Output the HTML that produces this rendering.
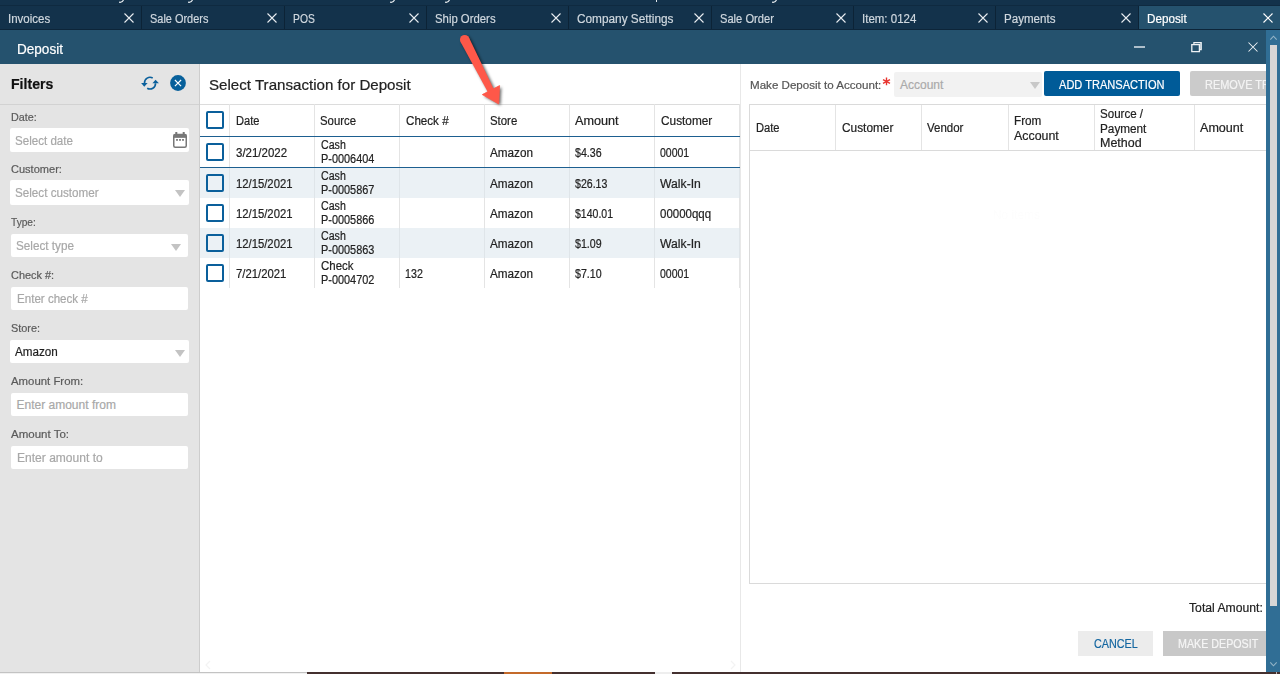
<!DOCTYPE html>
<html><head><meta charset="utf-8">
<style>
*{margin:0;padding:0;box-sizing:border-box}
html,body{width:1280px;height:674px;overflow:hidden;background:#fff;font-family:"Liberation Sans",sans-serif;position:relative}
.a{position:absolute}
.t{position:absolute;white-space:nowrap;line-height:1;-webkit-text-stroke:0.2px currentColor}
</style></head><body>
<div class="a" style="left:0px;top:0px;width:1280px;height:30px;background:#13324b;"></div>
<div class="a" style="left:0px;top:5px;width:1280px;height:1px;background:#0f2a40;"></div>
<svg class="a" style="left:119px;top:0px" width="6" height="3"><path d="M0 2.2Q3 3 4.5 0" stroke="#e6ebef" stroke-width="1.2" fill="none"/></svg>
<svg class="a" style="left:188px;top:0px" width="6" height="3"><path d="M0 2.2Q3 3 4.5 0" stroke="#e6ebef" stroke-width="1.2" fill="none"/></svg>
<svg class="a" style="left:390px;top:0px" width="6" height="3"><path d="M0 2.2Q3 3 4.5 0" stroke="#e6ebef" stroke-width="1.2" fill="none"/></svg>
<svg class="a" style="left:445px;top:0px" width="6" height="3"><path d="M0 2.2Q3 3 4.5 0" stroke="#e6ebef" stroke-width="1.2" fill="none"/></svg>
<svg class="a" style="left:772px;top:0px" width="6" height="3"><path d="M0 2.2Q3 3 4.5 0" stroke="#e6ebef" stroke-width="1.2" fill="none"/></svg>
<div class="a" style="left:656px;top:0px;width:1.3px;height:2px;background:#e6ebef;"></div>
<div class="a" style="left:141px;top:6px;width:1px;height:23px;background:#0c2336;"></div>
<div class="t" style="left:8.40px;top:13.42px;font-size:12.5px;color:#d0d8df;font-weight:normal;transform:scaleX(0.9199);transform-origin:0 0;">Invoices</div>
<svg class="a" style="left:124px;top:13px" width="10" height="10" viewBox="0 0 10 10"><path d="M0.5 0.5L9.5 9.5M9.5 0.5L0.5 9.5" stroke="#e8edf1" stroke-width="1.1" fill="none"/></svg>
<div class="a" style="left:284px;top:6px;width:1px;height:23px;background:#0c2336;"></div>
<div class="t" style="left:150.20px;top:13.42px;font-size:12.5px;color:#d0d8df;font-weight:normal;transform:scaleX(0.8749);transform-origin:0 0;">Sale Orders</div>
<svg class="a" style="left:267px;top:13px" width="10" height="10" viewBox="0 0 10 10"><path d="M0.5 0.5L9.5 9.5M9.5 0.5L0.5 9.5" stroke="#e8edf1" stroke-width="1.1" fill="none"/></svg>
<div class="a" style="left:426px;top:6px;width:1px;height:23px;background:#0c2336;"></div>
<div class="t" style="left:293.30px;top:13.42px;font-size:12.5px;color:#d0d8df;font-weight:normal;transform:scaleX(0.8265);transform-origin:0 0;">POS</div>
<svg class="a" style="left:409px;top:13px" width="10" height="10" viewBox="0 0 10 10"><path d="M0.5 0.5L9.5 9.5M9.5 0.5L0.5 9.5" stroke="#e8edf1" stroke-width="1.1" fill="none"/></svg>
<div class="a" style="left:568px;top:6px;width:1px;height:23px;background:#0c2336;"></div>
<div class="t" style="left:435.30px;top:13.42px;font-size:12.5px;color:#d0d8df;font-weight:normal;transform:scaleX(0.9079);transform-origin:0 0;">Ship Orders</div>
<svg class="a" style="left:551px;top:13px" width="10" height="10" viewBox="0 0 10 10"><path d="M0.5 0.5L9.5 9.5M9.5 0.5L0.5 9.5" stroke="#e8edf1" stroke-width="1.1" fill="none"/></svg>
<div class="a" style="left:711px;top:6px;width:1px;height:23px;background:#0c2336;"></div>
<div class="t" style="left:577.30px;top:13.42px;font-size:12.5px;color:#d0d8df;font-weight:normal;transform:scaleX(0.9449);transform-origin:0 0;">Company Settings</div>
<svg class="a" style="left:694px;top:13px" width="10" height="10" viewBox="0 0 10 10"><path d="M0.5 0.5L9.5 9.5M9.5 0.5L0.5 9.5" stroke="#e8edf1" stroke-width="1.1" fill="none"/></svg>
<div class="a" style="left:853px;top:6px;width:1px;height:23px;background:#0c2336;"></div>
<div class="t" style="left:720.00px;top:13.42px;font-size:12.5px;color:#d0d8df;font-weight:normal;transform:scaleX(0.8909);transform-origin:0 0;">Sale Order</div>
<svg class="a" style="left:836px;top:13px" width="10" height="10" viewBox="0 0 10 10"><path d="M0.5 0.5L9.5 9.5M9.5 0.5L0.5 9.5" stroke="#e8edf1" stroke-width="1.1" fill="none"/></svg>
<div class="a" style="left:995px;top:6px;width:1px;height:23px;background:#0c2336;"></div>
<div class="t" style="left:862.00px;top:13.42px;font-size:12.5px;color:#d0d8df;font-weight:normal;transform:scaleX(0.9203);transform-origin:0 0;">Item: 0124</div>
<svg class="a" style="left:978px;top:13px" width="10" height="10" viewBox="0 0 10 10"><path d="M0.5 0.5L9.5 9.5M9.5 0.5L0.5 9.5" stroke="#e8edf1" stroke-width="1.1" fill="none"/></svg>
<div class="a" style="left:1138px;top:6px;width:1px;height:23px;background:#0c2336;"></div>
<div class="t" style="left:1004.20px;top:13.42px;font-size:12.5px;color:#d0d8df;font-weight:normal;transform:scaleX(0.9258);transform-origin:0 0;">Payments</div>
<svg class="a" style="left:1121px;top:13px" width="10" height="10" viewBox="0 0 10 10"><path d="M0.5 0.5L9.5 9.5M9.5 0.5L0.5 9.5" stroke="#e8edf1" stroke-width="1.1" fill="none"/></svg>
<div class="a" style="left:1139px;top:6px;width:141px;height:23px;background:#25526e;"></div>
<div class="t" style="left:1147.25px;top:13.42px;font-size:12.5px;color:#ffffff;font-weight:normal;transform:scaleX(0.9357);transform-origin:0 0;">Deposit</div>
<svg class="a" style="left:1263px;top:13px" width="10" height="10" viewBox="0 0 10 10"><path d="M0.5 0.5L9.5 9.5M9.5 0.5L0.5 9.5" stroke="#ffffff" stroke-width="1.1" fill="none"/></svg>
<div class="a" style="left:0px;top:29px;width:1280px;height:1px;background:#0d2539;"></div>
<div class="a" style="left:0px;top:30px;width:1280px;height:34px;background:#25526e;"></div>
<div class="t" style="left:16.75px;top:42.15px;font-size:14px;color:#ffffff;font-weight:normal;transform:scaleX(0.9684);transform-origin:0 0;">Deposit</div>
<div class="a" style="left:1134px;top:46px;width:11px;height:2px;background:#aebfcb;"></div>
<svg class="a" style="left:1190px;top:41px" width="13" height="13" viewBox="1190 41 13 13"><rect x="1200" y="43.2" width="1.4" height="6" fill="#a3b6c3"/><path d="M1191.8 44.7h7.6v7h-7.6z" stroke="#eef2f5" stroke-width="1.3" fill="none"/><path d="M1193.9 44.4V42.6H1201.2V49.6H1199.8" stroke="#eef2f5" stroke-width="1.2" fill="none"/></svg>
<svg class="a" style="left:1248.3px;top:42px" width="10" height="10" viewBox="0 0 10 10"><path d="M0.5 0.5L9.5 9.5M9.5 0.5L0.5 9.5" stroke="#eef2f5" stroke-width="1.05" fill="none"/></svg>
<div class="a" style="left:0px;top:64px;width:200px;height:608px;background:#e4e4e4;"></div>
<div class="a" style="left:199px;top:64px;width:1px;height:608px;background:#cdcdcd;"></div>
<div class="t" style="left:10.50px;top:75.88px;font-size:15.5px;color:#111;font-weight:bold;transform:scaleX(0.9097);transform-origin:0 0;">Filters</div>
<svg class="a" style="left:136px;top:70px" width="30" height="26" viewBox="136 69.6 30 26">
<path d="M152.7 77.6A5.5 5.5 0 0 0 144.5 82.6" stroke="#0a609c" stroke-width="1.65" fill="none"/>
<path d="M141.1 82.5L147.6 82.5L144.3 86.3z" fill="#0a609c"/>
<path d="M147.2 87.8A5.5 5.5 0 0 0 155.5 82.8" stroke="#0a609c" stroke-width="1.65" fill="none"/>
<path d="M152.4 82.9L158.9 82.9L155.6 79.3z" fill="#0a609c"/>
</svg>
<svg class="a" style="left:170px;top:75px" width="16" height="16" viewBox="0 0 16 16">
<circle cx="8" cy="8" r="7.9" fill="#07609b"/>
<path d="M4.9 5L11.1 11.2M11.1 5L4.9 11.2" stroke="#fff" stroke-width="1.15"/>
</svg>
<div class="a" style="left:0px;top:104px;width:199px;height:1px;background:#d2d2d2;"></div>
<div class="t" style="left:10.60px;top:112.43px;font-size:11.3px;color:#5a5a5a;font-weight:normal;transform:scaleX(0.9544);transform-origin:0 0;">Date:</div>
<div class="a" style="left:10px;top:128px;width:179px;height:24px;background:#ffffff;border-radius:2px"></div>
<div class="t" style="left:15.20px;top:134.84px;font-size:12px;color:#a8a8a8;font-weight:normal;transform:scaleX(0.9650);transform-origin:0 0;">Select date</div>
<svg class="a" style="left:173px;top:132px" width="14" height="16" viewBox="0 0 14 16">
<rect x="0.75" y="2.45" width="12.5" height="12.8" rx="1.5" stroke="#777" stroke-width="1.5" fill="none"/>
<rect x="0.75" y="2.45" width="12.5" height="3.4" fill="#777"/>
<rect x="2.3" y="0" width="2" height="3" fill="#777"/><rect x="9.7" y="0" width="2" height="3" fill="#777"/>
<rect x="3.1" y="7" width="1.8" height="1.8" fill="#777"/><rect x="6.1" y="7" width="1.8" height="1.8" fill="#777"/><rect x="9.1" y="7" width="1.8" height="1.8" fill="#777"/>
</svg>
<div class="t" style="left:10.60px;top:164.43px;font-size:11.3px;color:#5a5a5a;font-weight:normal;transform:scaleX(0.9764);transform-origin:0 0;">Customer:</div>
<div class="a" style="left:10px;top:180px;width:179px;height:24.6px;background:#ffffff;border-radius:2px"></div>
<div class="t" style="left:15.20px;top:186.84px;font-size:12px;color:#a8a8a8;font-weight:normal;transform:scaleX(0.9715);transform-origin:0 0;">Select customer</div>
<svg class="a" style="left:175.0px;top:190px" width="10" height="7"><path d="M0 0h10L5 7z" fill="#c3c3c3"/></svg>
<div class="t" style="left:10.60px;top:217.43px;font-size:11.3px;color:#5a5a5a;font-weight:normal;transform:scaleX(0.8982);transform-origin:0 0;">Type:</div>
<div class="a" style="left:11px;top:233.7px;width:177px;height:23px;background:#ffffff;border-radius:2px"></div>
<div class="t" style="left:16.00px;top:239.84px;font-size:12px;color:#a8a8a8;font-weight:normal;transform:scaleX(0.9768);transform-origin:0 0;">Select type</div>
<svg class="a" style="left:170.5px;top:243.7px" width="10" height="7"><path d="M0 0h10L5 7z" fill="#c3c3c3"/></svg>
<div class="t" style="left:10.60px;top:270.43px;font-size:11.3px;color:#5a5a5a;font-weight:normal;transform:scaleX(0.9668);transform-origin:0 0;">Check #:</div>
<div class="a" style="left:11px;top:287px;width:177px;height:23px;background:#ffffff;border-radius:2px"></div>
<div class="t" style="left:16.50px;top:292.84px;font-size:12px;color:#a8a8a8;font-weight:normal;transform:scaleX(0.9649);transform-origin:0 0;">Enter check #</div>
<div class="t" style="left:10.60px;top:323.43px;font-size:11.3px;color:#5a5a5a;font-weight:normal;transform:scaleX(0.9633);transform-origin:0 0;">Store:</div>
<div class="a" style="left:10px;top:339.7px;width:179px;height:23.6px;background:#ffffff;border-radius:2px"></div>
<div class="t" style="left:15.20px;top:345.84px;font-size:12px;color:#1e1e1e;font-weight:normal;transform:scaleX(0.9727);transform-origin:0 0;">Amazon</div>
<svg class="a" style="left:175.0px;top:349.7px" width="10" height="7"><path d="M0 0h10L5 7z" fill="#c3c3c3"/></svg>
<div class="t" style="left:10.60px;top:376.43px;font-size:11.3px;color:#5a5a5a;font-weight:normal;transform:scaleX(1.0077);transform-origin:0 0;">Amount From:</div>
<div class="a" style="left:11px;top:393px;width:177px;height:23px;background:#ffffff;border-radius:2px"></div>
<div class="t" style="left:16.50px;top:398.84px;font-size:12px;color:#a8a8a8;font-weight:normal;">Enter amount from</div>
<div class="t" style="left:10.60px;top:429.43px;font-size:11.3px;color:#5a5a5a;font-weight:normal;transform:scaleX(1.0185);transform-origin:0 0;">Amount To:</div>
<div class="a" style="left:11px;top:446px;width:177px;height:23px;background:#ffffff;border-radius:2px"></div>
<div class="t" style="left:16.50px;top:451.84px;font-size:12px;color:#a8a8a8;font-weight:normal;transform:scaleX(1.0038);transform-origin:0 0;">Enter amount to</div>
<div class="t" style="left:208.60px;top:77.61px;font-size:14.4px;color:#222;font-weight:normal;transform:scaleX(1.0503);transform-origin:0 0;">Select Transaction for Deposit</div>
<div class="a" style="left:200px;top:104px;width:540px;height:1px;background:#dcdcdc;"></div>
<div class="a" style="left:229px;top:104px;width:1px;height:184px;background:#e4e4e4;"></div>
<div class="a" style="left:314px;top:104px;width:1px;height:184px;background:#e4e4e4;"></div>
<div class="a" style="left:399px;top:104px;width:1px;height:184px;background:#e4e4e4;"></div>
<div class="a" style="left:484px;top:104px;width:1px;height:184px;background:#e4e4e4;"></div>
<div class="a" style="left:569px;top:104px;width:1px;height:184px;background:#e4e4e4;"></div>
<div class="a" style="left:654px;top:104px;width:1px;height:184px;background:#e4e4e4;"></div>
<div class="a" style="left:739px;top:104px;width:1px;height:184px;background:#e4e4e4;"></div>
<div class="a" style="left:206px;top:111px;width:18px;height:18px;border:2px solid #0a5f9b;border-radius:2px"></div>
<div class="t" style="left:235.65px;top:114.84px;font-size:12px;color:#222;font-weight:normal;transform:scaleX(0.9241);transform-origin:0 0;">Date</div>
<div class="t" style="left:320.00px;top:114.84px;font-size:12px;color:#222;font-weight:normal;transform:scaleX(0.9474);transform-origin:0 0;">Source</div>
<div class="t" style="left:405.50px;top:114.84px;font-size:12px;color:#222;font-weight:normal;transform:scaleX(0.9682);transform-origin:0 0;">Check #</div>
<div class="t" style="left:490.00px;top:114.84px;font-size:12px;color:#222;font-weight:normal;transform:scaleX(0.9502);transform-origin:0 0;">Store</div>
<div class="t" style="left:575.20px;top:114.84px;font-size:12px;color:#222;font-weight:normal;transform:scaleX(1.0538);transform-origin:0 0;">Amount</div>
<div class="t" style="left:660.60px;top:114.84px;font-size:12px;color:#222;font-weight:normal;transform:scaleX(0.9865);transform-origin:0 0;">Customer</div>
<div class="a" style="left:206px;top:143px;width:18px;height:18px;border:2px solid #0a5f9b;border-radius:2px"></div>
<div class="t" style="left:235.50px;top:146.84px;font-size:12px;color:#222;font-weight:normal;transform:scaleX(0.9555);transform-origin:0 0;">3/21/2022</div>
<div class="t" style="left:320.50px;top:138.64px;font-size:12px;color:#222;font-weight:normal;transform:scaleX(0.8857);transform-origin:0 0;">Cash</div>
<div class="t" style="left:320.50px;top:153.34px;font-size:12px;color:#222;font-weight:normal;transform:scaleX(0.9089);transform-origin:0 0;">P-0006404</div>
<div class="t" style="left:490.30px;top:146.84px;font-size:12px;color:#222;font-weight:normal;transform:scaleX(0.9773);transform-origin:0 0;">Amazon</div>
<div class="t" style="left:575.30px;top:146.84px;font-size:12px;color:#222;font-weight:normal;transform:scaleX(0.8867);transform-origin:0 0;">$4.36</div>
<div class="t" style="left:659.80px;top:146.84px;font-size:12px;color:#222;font-weight:normal;transform:scaleX(0.8749);transform-origin:0 0;">00001</div>
<div class="a" style="left:200px;top:168px;width:540px;height:30px;background:#ebf1f5;"></div>
<div class="a" style="left:229px;top:168px;width:1px;height:30px;background:#dfe5e9;"></div>
<div class="a" style="left:314px;top:168px;width:1px;height:30px;background:#dfe5e9;"></div>
<div class="a" style="left:399px;top:168px;width:1px;height:30px;background:#dfe5e9;"></div>
<div class="a" style="left:484px;top:168px;width:1px;height:30px;background:#dfe5e9;"></div>
<div class="a" style="left:569px;top:168px;width:1px;height:30px;background:#dfe5e9;"></div>
<div class="a" style="left:654px;top:168px;width:1px;height:30px;background:#dfe5e9;"></div>
<div class="a" style="left:739px;top:168px;width:1px;height:30px;background:#dfe5e9;"></div>
<div class="a" style="left:206px;top:174px;width:18px;height:18px;border:2px solid #0a5f9b;border-radius:2px"></div>
<div class="t" style="left:235.50px;top:177.84px;font-size:12px;color:#222;font-weight:normal;transform:scaleX(0.9400);transform-origin:0 0;">12/15/2021</div>
<div class="t" style="left:320.50px;top:169.64px;font-size:12px;color:#222;font-weight:normal;transform:scaleX(0.8857);transform-origin:0 0;">Cash</div>
<div class="t" style="left:320.50px;top:184.34px;font-size:12px;color:#222;font-weight:normal;transform:scaleX(0.9089);transform-origin:0 0;">P-0005867</div>
<div class="t" style="left:490.30px;top:177.84px;font-size:12px;color:#222;font-weight:normal;transform:scaleX(0.9773);transform-origin:0 0;">Amazon</div>
<div class="t" style="left:575.30px;top:177.84px;font-size:12px;color:#222;font-weight:normal;transform:scaleX(0.8816);transform-origin:0 0;">$26.13</div>
<div class="t" style="left:659.80px;top:177.84px;font-size:12px;color:#222;font-weight:normal;transform:scaleX(1.0161);transform-origin:0 0;">Walk-In</div>
<div class="a" style="left:206px;top:204px;width:18px;height:18px;border:2px solid #0a5f9b;border-radius:2px"></div>
<div class="t" style="left:235.50px;top:207.84px;font-size:12px;color:#222;font-weight:normal;transform:scaleX(0.9400);transform-origin:0 0;">12/15/2021</div>
<div class="t" style="left:320.50px;top:199.64px;font-size:12px;color:#222;font-weight:normal;transform:scaleX(0.8857);transform-origin:0 0;">Cash</div>
<div class="t" style="left:320.50px;top:214.34px;font-size:12px;color:#222;font-weight:normal;transform:scaleX(0.9089);transform-origin:0 0;">P-0005866</div>
<div class="t" style="left:490.30px;top:207.84px;font-size:12px;color:#222;font-weight:normal;transform:scaleX(0.9773);transform-origin:0 0;">Amazon</div>
<div class="t" style="left:575.30px;top:207.84px;font-size:12px;color:#222;font-weight:normal;transform:scaleX(0.8761);transform-origin:0 0;">$140.01</div>
<div class="t" style="left:659.80px;top:207.84px;font-size:12px;color:#222;font-weight:normal;transform:scaleX(0.9555);transform-origin:0 0;">00000qqq</div>
<div class="a" style="left:200px;top:228px;width:540px;height:30px;background:#ebf1f5;"></div>
<div class="a" style="left:229px;top:228px;width:1px;height:30px;background:#dfe5e9;"></div>
<div class="a" style="left:314px;top:228px;width:1px;height:30px;background:#dfe5e9;"></div>
<div class="a" style="left:399px;top:228px;width:1px;height:30px;background:#dfe5e9;"></div>
<div class="a" style="left:484px;top:228px;width:1px;height:30px;background:#dfe5e9;"></div>
<div class="a" style="left:569px;top:228px;width:1px;height:30px;background:#dfe5e9;"></div>
<div class="a" style="left:654px;top:228px;width:1px;height:30px;background:#dfe5e9;"></div>
<div class="a" style="left:739px;top:228px;width:1px;height:30px;background:#dfe5e9;"></div>
<div class="a" style="left:206px;top:234px;width:18px;height:18px;border:2px solid #0a5f9b;border-radius:2px"></div>
<div class="t" style="left:235.50px;top:237.84px;font-size:12px;color:#222;font-weight:normal;transform:scaleX(0.9400);transform-origin:0 0;">12/15/2021</div>
<div class="t" style="left:320.50px;top:229.64px;font-size:12px;color:#222;font-weight:normal;transform:scaleX(0.8857);transform-origin:0 0;">Cash</div>
<div class="t" style="left:320.50px;top:244.34px;font-size:12px;color:#222;font-weight:normal;transform:scaleX(0.9089);transform-origin:0 0;">P-0005863</div>
<div class="t" style="left:490.30px;top:237.84px;font-size:12px;color:#222;font-weight:normal;transform:scaleX(0.9773);transform-origin:0 0;">Amazon</div>
<div class="t" style="left:575.30px;top:237.84px;font-size:12px;color:#222;font-weight:normal;transform:scaleX(0.8867);transform-origin:0 0;">$1.09</div>
<div class="t" style="left:659.80px;top:237.84px;font-size:12px;color:#222;font-weight:normal;transform:scaleX(1.0161);transform-origin:0 0;">Walk-In</div>
<div class="a" style="left:206px;top:264px;width:18px;height:18px;border:2px solid #0a5f9b;border-radius:2px"></div>
<div class="t" style="left:235.50px;top:267.84px;font-size:12px;color:#222;font-weight:normal;transform:scaleX(0.9424);transform-origin:0 0;">7/21/2021</div>
<div class="t" style="left:320.50px;top:259.64px;font-size:12px;color:#222;font-weight:normal;transform:scaleX(0.9553);transform-origin:0 0;">Check</div>
<div class="t" style="left:320.50px;top:274.34px;font-size:12px;color:#222;font-weight:normal;transform:scaleX(0.9089);transform-origin:0 0;">P-0004702</div>
<div class="t" style="left:405.30px;top:267.84px;font-size:12px;color:#222;font-weight:normal;transform:scaleX(0.8900);transform-origin:0 0;">132</div>
<div class="t" style="left:490.30px;top:267.84px;font-size:12px;color:#222;font-weight:normal;transform:scaleX(0.9773);transform-origin:0 0;">Amazon</div>
<div class="t" style="left:575.30px;top:267.84px;font-size:12px;color:#222;font-weight:normal;transform:scaleX(0.8867);transform-origin:0 0;">$7.10</div>
<div class="t" style="left:659.80px;top:267.84px;font-size:12px;color:#222;font-weight:normal;transform:scaleX(0.8749);transform-origin:0 0;">00001</div>
<div class="a" style="left:200px;top:136px;width:540px;height:1px;background:#1d5f90;"></div>
<div class="a" style="left:200px;top:167px;width:540px;height:1px;background:#1d5f90;"></div>
<div class="a" style="left:740px;top:64px;width:1px;height:608px;background:#e8e8e8;"></div>
<svg class="a" style="left:204px;top:660px" width="8" height="10"><path d="M6 1L2 5L6 9" stroke="#f3f3f3" stroke-width="1.2" fill="none"/></svg>
<svg class="a" style="left:729px;top:660px" width="8" height="10"><path d="M2 1L6 5L2 9" stroke="#f3f3f3" stroke-width="1.2" fill="none"/></svg>
<div class="t" style="left:749.70px;top:79.77px;font-size:11.5px;color:#555;font-weight:normal;transform:scaleX(1.0071);transform-origin:0 0;">Make Deposit to Account:</div>
<svg class="a" style="left:882px;top:77px" width="9" height="9" viewBox="0 0 9 9"><path d="M4.5 0.5V8.3M1 2.6L8 6.4M8 2.6L1 6.4" stroke="#e8342f" stroke-width="1.4"/></svg>
<div class="a" style="left:894px;top:72px;width:148px;height:25px;background:#f2f2f2;border-radius:2px"></div>
<div class="t" style="left:900.00px;top:79.34px;font-size:12px;color:#aaaaaa;font-weight:normal;">Account</div>
<svg class="a" style="left:1030px;top:82px" width="10" height="7"><path d="M0 0h10L5 7z" fill="#c8c8c8"/></svg>
<div class="a" style="left:1044px;top:71px;width:136px;height:25px;background:#005b98;border-radius:2px"></div>
<div class="t" style="left:1059.00px;top:79.12px;font-size:12.5px;color:#ffffff;font-weight:normal;transform:scaleX(0.8847);transform-origin:0 0;">ADD TRANSACTION</div>
<div class="a" style="left:1190px;top:71px;width:76px;height:25px;overflow:hidden"><div class="a" style="left:0px;top:0px;width:90px;height:25px;background:#cbcbcb;border-radius:2px"></div><div class="t" style="left:15.20px;top:8.12px;font-size:12.5px;color:#f4f4f4;font-weight:normal;transform:scaleX(0.8756);transform-origin:0 0;">REMOVE TRANSACTION</div></div>
<div class="a" style="left:749px;top:104px;width:540px;height:479.5px;background:#ffffff;border:1px solid #dadada"></div>
<div class="t" style="left:993.00px;top:208.84px;font-size:12px;color:#fdfdfd;font-weight:normal;transform:scaleX(0.9921);transform-origin:0 0;">No items</div>
<div class="a" style="left:750px;top:150px;width:520px;height:1px;background:#dadada;"></div>
<div class="a" style="left:835px;top:105px;width:1px;height:45px;background:#e4e4e4;"></div>
<div class="a" style="left:921px;top:105px;width:1px;height:45px;background:#e4e4e4;"></div>
<div class="a" style="left:1007.5px;top:105px;width:1px;height:45px;background:#e4e4e4;"></div>
<div class="a" style="left:1094px;top:105px;width:1px;height:45px;background:#e4e4e4;"></div>
<div class="a" style="left:1194px;top:105px;width:1px;height:45px;background:#e4e4e4;"></div>
<div class="t" style="left:755.60px;top:122.34px;font-size:12px;color:#222;font-weight:normal;transform:scaleX(0.9300);transform-origin:0 0;">Date</div>
<div class="t" style="left:841.60px;top:122.34px;font-size:12px;color:#222;font-weight:normal;transform:scaleX(0.9885);transform-origin:0 0;">Customer</div>
<div class="t" style="left:927.30px;top:122.34px;font-size:12px;color:#222;font-weight:normal;transform:scaleX(0.9553);transform-origin:0 0;">Vendor</div>
<div class="t" style="left:1014.20px;top:115.34px;font-size:12px;color:#222;font-weight:normal;transform:scaleX(0.9786);transform-origin:0 0;">From</div>
<div class="t" style="left:1014.20px;top:130.24px;font-size:12px;color:#222;font-weight:normal;transform:scaleX(1.0329);transform-origin:0 0;">Account</div>
<div class="t" style="left:1100.20px;top:107.84px;font-size:12px;color:#222;font-weight:normal;transform:scaleX(0.9631);transform-origin:0 0;">Source /</div>
<div class="t" style="left:1100.20px;top:122.59px;font-size:12px;color:#222;font-weight:normal;transform:scaleX(0.9794);transform-origin:0 0;">Payment</div>
<div class="t" style="left:1100.20px;top:137.24px;font-size:12px;color:#222;font-weight:normal;transform:scaleX(1.0400);transform-origin:0 0;">Method</div>
<div class="t" style="left:1200.20px;top:122.34px;font-size:12px;color:#222;font-weight:normal;transform:scaleX(1.0465);transform-origin:0 0;">Amount</div>
<div class="t" style="left:1188.60px;top:601.92px;font-size:12.5px;color:#222;font-weight:normal;transform:scaleX(0.9756);transform-origin:0 0;">Total Amount:</div>
<div class="a" style="left:1078px;top:631px;width:75px;height:24.5px;background:#ececec;"></div>
<div class="t" style="left:1093.50px;top:637.82px;font-size:12.5px;color:#1466a0;font-weight:normal;transform:scaleX(0.8631);transform-origin:0 0;">CANCEL</div>
<div class="a" style="left:1163px;top:631px;width:110px;height:24.5px;background:#c8c8c8;"></div>
<div class="t" style="left:1178.30px;top:637.82px;font-size:12.5px;color:#f5f5f5;font-weight:normal;transform:scaleX(0.8555);transform-origin:0 0;">MAKE DEPOSIT</div>
<div class="a" style="left:1266px;top:30px;width:14px;height:642px;background:#306e95;"></div>
<div class="a" style="left:1270px;top:45px;width:7px;height:561px;background:#d6d6d6;"></div>
<svg class="a" style="left:1269px;top:34px" width="9" height="7"><path d="M1.3 5.6L4.5 2.2L7.7 5.6" stroke="#93b3c6" stroke-width="1.1" fill="none"/></svg>
<svg class="a" style="left:1269px;top:661px" width="9" height="7"><path d="M1.3 1.4L4.5 4.8L7.7 1.4" stroke="#93b3c6" stroke-width="1.1" fill="none"/></svg>
<div class="a" style="left:0px;top:672px;width:307px;height:1px;background:#c3c3c3;"></div>
<div class="a" style="left:0px;top:673px;width:307px;height:1px;background:#f1f1f1;"></div>
<div class="a" style="left:307px;top:672px;width:973px;height:2px;background:#44302f;"></div>
<div class="a" style="left:1276px;top:672px;width:1px;height:2px;background:#bfb3b3;"></div>
<div class="a" style="left:504px;top:672px;width:48px;height:2px;background:#c46a2a;"></div>
<div class="a" style="left:655px;top:672px;width:17px;height:2px;background:#eeeeee;"></div>
<svg class="a" style="left:440px;top:25px" width="80" height="90" viewBox="440 25 80 90">
<defs><filter id="sh" x="-50%" y="-50%" width="200%" height="200%"><feGaussianBlur stdDeviation="1.4"/></filter></defs>
<g transform="translate(1.8,1.6)" opacity="0.6" filter="url(#sh)">
<circle cx="464.7" cy="39.7" r="4.75" fill="#000"/><path d="M460.47 41.87L468.93 37.53L493.94 89.49L488.06 92.51Z" fill="#000"/><path d="M482.3 94.6L499.6 85.6L498.7 104z" fill="#000"/>
</g>
<circle cx="464.7" cy="39.7" r="4.75" fill="#fe5849"/><path d="M460.47 41.87L468.93 37.53L493.94 89.49L488.06 92.51Z" fill="#fe5849"/>
<path d="M482.3 94.6L499.6 85.6L498.7 104z" fill="#fe5849" stroke="#fe5849" stroke-width="0.8" stroke-linejoin="round"/>
</svg>
</body></html>
